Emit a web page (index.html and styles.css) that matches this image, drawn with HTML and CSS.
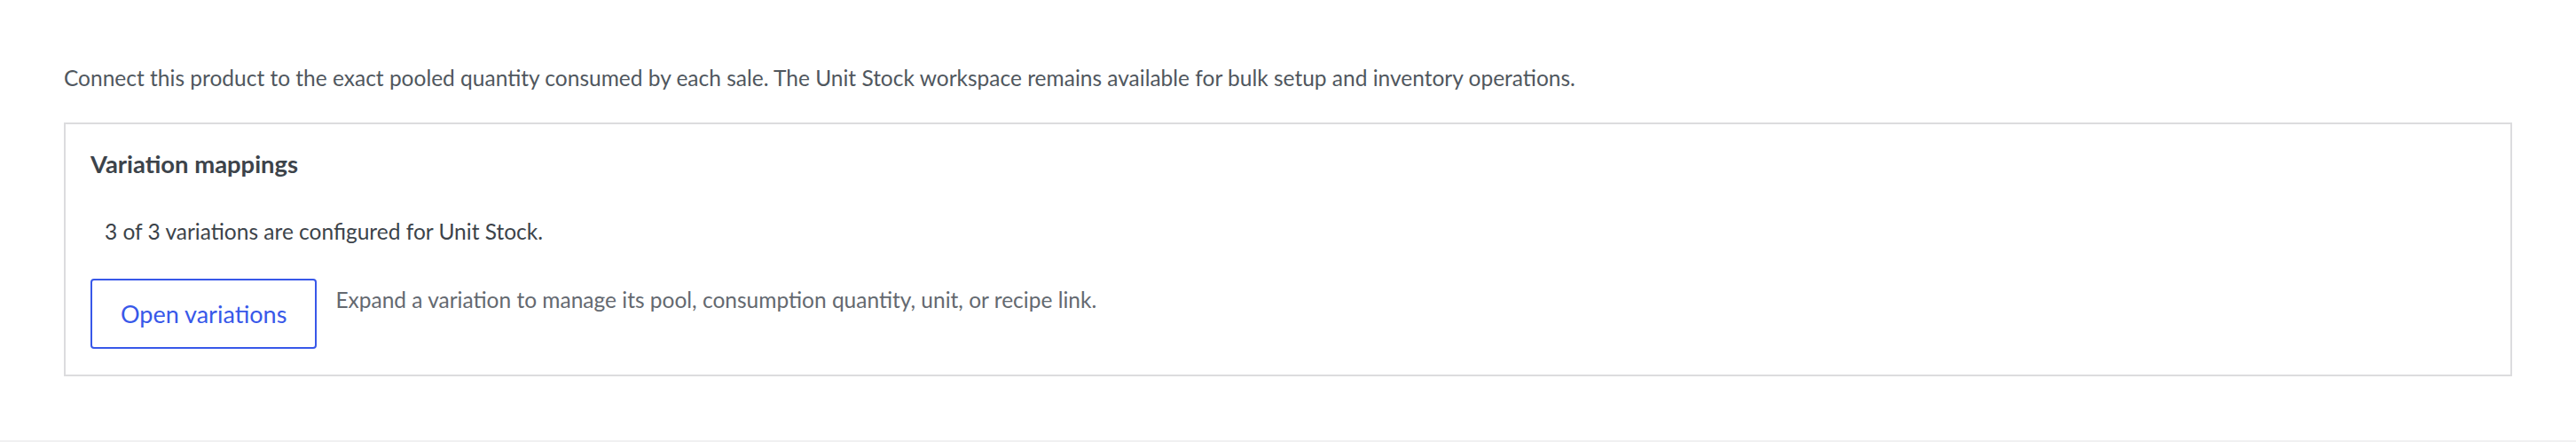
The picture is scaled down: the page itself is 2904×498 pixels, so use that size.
FILE: index.html
```html
<!DOCTYPE html>
<html>
<head>
    <title>Unit Stock</title>
    <link rel="stylesheet" href="styles.css">
</head>
<body>
    <div class="unit-stock">
        <p class="intro">Connect this product to the exact pooled quantity consumed by each sale. The Unit Stock workspace remains available for bulk setup and inventory operations.</p>

        <div class="panel">
            <h3>Variation mappings</h3>
            <p class="summary">3 of 3 variations are configured for Unit Stock.</p>
            <div class="actions">
                <button class="button" type="button">Open variations</button>
                <p class="hint">Expand a variation to manage its pool, consumption quantity, unit, or recipe link.</p>
            </div>
        </div>
    </div>
</body>
</html>
```

FILE: styles.css
```css
body {
    margin: 0;
    background: #fff;
    font-family: Lato, "Open Sans", sans-serif;
    font-size: 24.5px;
    line-height: 39px;
    color: #50575e;
}

.unit-stock {
    padding: 68px 72px 72px;
    border-bottom: 2px solid #f0f0f1;
}

.intro {
    margin: 0 0 31px;
}

.panel {
    border: 2px solid #dcdcde;
    padding: 25px 28px 29px;
}

.panel h3 {
    margin: 0;
    font-size: 27.4px;
    line-height: 39px;
    font-weight: bold;
    color: #3c434a;
}

.summary {
    margin: 37px 0 0 16px;
    color: #3c434a;
}

.actions {
    display: flex;
    align-items: flex-start;
    gap: 21px;
    margin-top: 34px;
}

.button {
    height: 79px;
    padding: 0 32px;
    background: #fff;
    border: 2px solid #3858e9;
    border-radius: 4px;
    color: #3858e9;
    font-family: inherit;
    font-size: 27px;
    cursor: pointer;
}

.hint {
    margin: 4px 0 0;
    color: #646970;
}
```
